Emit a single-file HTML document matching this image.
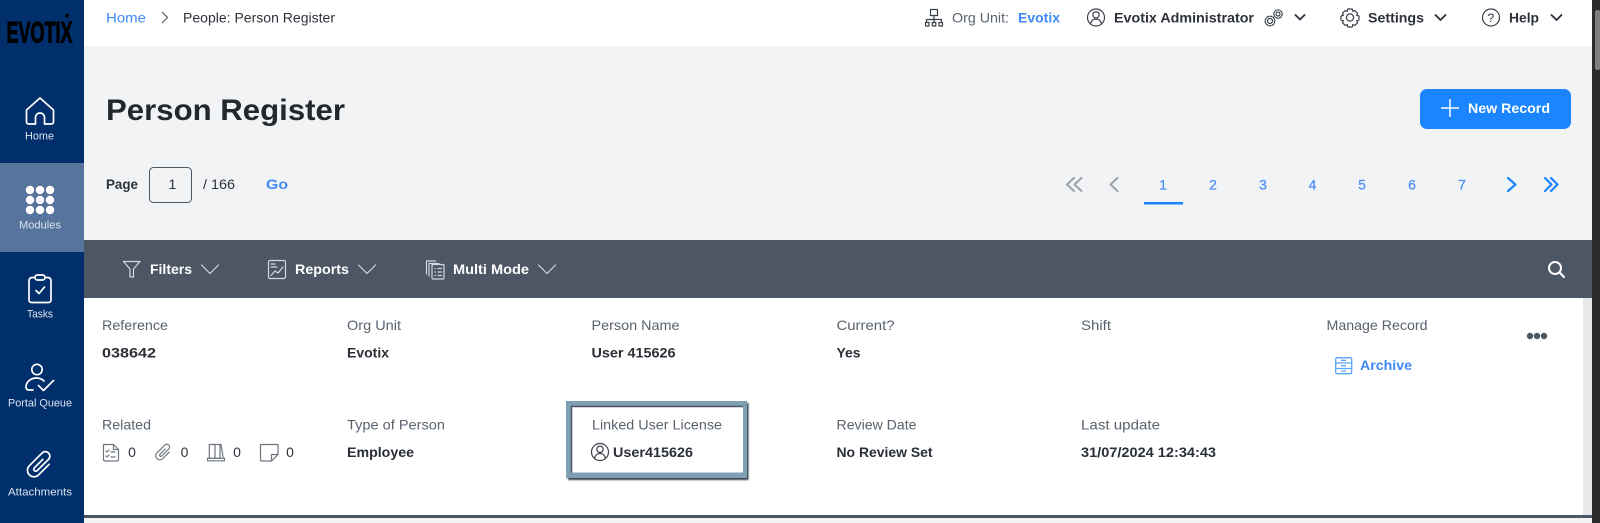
<!DOCTYPE html>
<html lang="en">
<head>
<meta charset="utf-8">
<title>Person Register</title>
<style>
html,body{margin:0;padding:0;width:1600px;height:523px;overflow:hidden;background:#fff}
svg{display:block}
text{font-family:"Liberation Sans",Arial,sans-serif;font-size:14px}
.b{font-weight:700}
.l{fill:#59626f}
.v{fill:#2a2f37;font-weight:700}
.d{fill:#2d323a}
.blue{fill:#3f8af5}
.nav{font-size:11px;fill:#dbe4ef;text-anchor:start}
.pg{fill:#4a90f5;stroke:#4a90f5;stroke-width:.25}
.ic{fill:none;stroke:#3a4049;stroke-width:1.2;stroke-linecap:round;stroke-linejoin:round}
.ch{fill:none;stroke:#2d323a;stroke-width:1.8;stroke-linecap:round;stroke-linejoin:round}
.w{fill:none;stroke:#fff;stroke-width:1.7;stroke-linecap:round;stroke-linejoin:round}
.t{fill:none;stroke:#d5d9df;stroke-width:1.2;stroke-linecap:round;stroke-linejoin:round}
.g{fill:none;stroke:#6e7580;stroke-width:1.2;stroke-linecap:round;stroke-linejoin:round}
</style>
</head>
<body>
<svg width="1600" height="523" viewBox="0 0 1600 523" xmlns="http://www.w3.org/2000/svg">
<defs><filter id="sh" x="-5%" y="-10%" width="110%" height="120%"><feGaussianBlur stdDeviation="0.8"/></filter></defs>
<!-- backgrounds -->
<rect width="1600" height="523" fill="#fff"/>
<rect x="84" y="46" width="1508" height="194" fill="#f2f3f5"/>
<rect x="84" y="240" width="1508" height="58" fill="#4d5665"/>
<rect x="1583" y="298" width="9" height="217" fill="#e7e8ea"/>
<rect x="84" y="515" width="1508" height="3" fill="#4d5665"/>
<rect x="84" y="518" width="1508" height="5" fill="#f2f3f5"/>
<rect x="1592" width="8" height="523" fill="#2b2b2b"/>
<rect x="1595" y="10" width="5" height="60" rx="2" fill="#7f7f7f"/>

<!-- sidebar -->
<rect width="84" height="523" fill="#002f6c"/>
<rect y="163" width="84" height="89" fill="#56749c"/>
<text x="6.500" y="42.600" class="b" style="font-size:29.500px" fill="#000" stroke="#000" stroke-width="1" textLength="66" lengthAdjust="spacingAndGlyphs">EVOTIX</text>
<circle cx="67" cy="15.700" r="1.800" fill="#000"/>

<path class="w" d="M26.500 110L40 98l13.500 12v12a2 2 0 0 1-2 2H44.500v-6.500a4.500 4.500 0 0 0-9 0V124H28.500a2 2 0 0 1-2-2z"/>
<text x="25" y="139.500" class="nav" textLength="29" lengthAdjust="spacingAndGlyphs">Home</text>

<g fill="#fff">
<circle cx="30" cy="190" r="4.200"/><circle cx="40" cy="190" r="4.200"/><circle cx="50" cy="190" r="4.200"/>
<circle cx="30" cy="200" r="4.200"/><circle cx="40" cy="200" r="4.200"/><circle cx="50" cy="200" r="4.200"/>
<circle cx="30" cy="210" r="4.200"/><circle cx="40" cy="210" r="4.200"/><circle cx="50" cy="210" r="4.200"/>
</g>
<text x="19" y="228.500" class="nav" textLength="42" lengthAdjust="spacingAndGlyphs">Modules</text>

<path class="w" d="M35 277.500h-3a3 3 0 0 0-3 3V300a2.500 2.500 0 0 0 2.500 2.500h17a2.500 2.500 0 0 0 2.500-2.500V280.500a3 3 0 0 0-3-3h-3"/>
<rect class="w" x="35" y="275" width="10" height="5" rx="2.500"/>
<path class="w" d="M36 290.500l3 3 5.500-6.500"/>
<text x="27" y="317.500" class="nav" textLength="26" lengthAdjust="spacingAndGlyphs">Tasks</text>

<circle class="w" cx="37" cy="369.500" r="5.200"/>
<path class="w" d="M44 381c-2-2-4.500-3-7.500-3-6 0-10.500 4-10.500 9 0 2 1 3 3 3h4"/>
<path class="w" d="M38.500 385.500l5 5 10-10"/>
<text x="8" y="406.500" class="nav" textLength="64" lengthAdjust="spacingAndGlyphs">Portal Queue</text>

<g transform="translate(40 465) rotate(45)">
<path class="w" d="M6-7V8a6.500 6.500 0 0 1-13 0V-10a4.500 4.500 0 0 1 9 0V6a2 2 0 0 1-4 0V-6"/>
</g>
<text x="8" y="495.500" class="nav" textLength="64" lengthAdjust="spacingAndGlyphs">Attachments</text>

<!-- top bar -->
<text x="106" y="22.500" class="blue" textLength="40" lengthAdjust="spacingAndGlyphs">Home</text>
<path d="M162 12l5.500 5.500-5.500 5.500" fill="none" stroke="#555c66" stroke-width="1.200"/>
<text x="183" y="22.500" class="d" textLength="152" lengthAdjust="spacingAndGlyphs">People: Person Register</text>

<g class="ic">
<rect x="930.500" y="9.500" width="7" height="6"/>
<path d="M934 15.500v4M926.500 22v-2.500h15V22M934 19.500V22"/>
<rect x="925.500" y="22.500" width="3.500" height="3.500"/><rect x="932.300" y="22.500" width="3.500" height="3.500"/><rect x="939" y="22.500" width="3.500" height="3.500"/>
</g>
<text x="952" y="22.500" class="l" textLength="57" lengthAdjust="spacingAndGlyphs">Org Unit:</text>
<text x="1018" y="22.500" class="b blue" textLength="42" lengthAdjust="spacingAndGlyphs">Evotix</text>

<g class="ic">
<circle cx="1096" cy="17.500" r="8.500"/><circle cx="1096" cy="14.800" r="3.200"/>
<path d="M1090.500 24c.6-3.500 3-5 5.500-5s4.900 1.500 5.500 5"/>
</g>
<text x="1114" y="22.500" class="b d" textLength="140" lengthAdjust="spacingAndGlyphs">Evotix Administrator</text>
<g class="ic" stroke-width="1">
<circle cx="1270" cy="21" r="2.500"/><circle cx="1270" cy="21" r="4.800" stroke-dasharray="2 1.200"/>
<circle cx="1278" cy="14" r="2"/><circle cx="1278" cy="14" r="4.200" stroke-dasharray="2 1.200"/>
</g>
<path class="ch" d="M1295.500 15l4.500 4.500 4.500-4.500"/>

<g class="ic">
<circle cx="1350" cy="17.500" r="3.600"/>
<path d="M1347.800 9h4.400l.6 2.400 2-.9 2.800 2.800-1 2 2.400.7v4l-2.400.7 1 2-2.800 2.800-2-.9-.6 2.400h-4.400l-.6-2.400-2 .9-2.800-2.800 1-2-2.400-.7v-4l2.400-.7-1-2 2.800-2.800 2 .9z"/>
</g>
<text x="1368" y="22.500" class="b d" textLength="56" lengthAdjust="spacingAndGlyphs">Settings</text>
<path class="ch" d="M1435.500 15l5 5 5-5"/>

<circle class="ic" cx="1491" cy="17.500" r="8.500"/>
<text x="1487.500" y="22" style="font-size:12px" class="d">?</text>
<text x="1509" y="22.500" class="b d" textLength="30" lengthAdjust="spacingAndGlyphs">Help</text>
<path class="ch" d="M1551.500 15l5 5 5-5"/>

<!-- heading -->
<text x="106" y="120" class="b" style="font-size:30px" fill="#23272e" textLength="239" lengthAdjust="spacingAndGlyphs">Person Register</text>
<rect x="1420" y="89" width="151" height="40" rx="7" fill="#1a85ff"/>
<path d="M1450 99v18M1441 108h18" stroke="#fff" stroke-width="1.500" fill="none"/>
<text x="1468" y="113" class="b" fill="#fff" textLength="82" lengthAdjust="spacingAndGlyphs">New Record</text>

<!-- pager -->
<text x="106" y="189" class="b d" textLength="32" lengthAdjust="spacingAndGlyphs">Page</text>
<rect x="149.500" y="167.500" width="42" height="35" rx="4" fill="none" stroke="#4d5665"/>
<text x="168.500" y="189" class="d">1</text>
<text x="203" y="189" class="d" textLength="32" lengthAdjust="spacingAndGlyphs">/ 166</text>
<text x="266" y="189" class="b blue" textLength="22" lengthAdjust="spacingAndGlyphs">Go</text>

<g fill="none" stroke-width="2.200" stroke-linecap="round" stroke-linejoin="round">
<path stroke="#9ea4ae" d="M1074 178l-7 6.500 7 6.500M1081.500 178l-7 6.500 7 6.500M1117.500 178l-7 6.500 7 6.500"/>
<path stroke="#1a85ff" d="M1508 178l7.500 6.500-7.500 6.500M1545 178l6.500 6.500-6.500 6.500M1551 178l6.500 6.500-6.500 6.500"/>
</g>
<g class="pg" text-anchor="middle">
<text x="1163" y="189.500">1</text><text x="1213" y="189.500">2</text><text x="1263" y="189.500">3</text><text x="1312.500" y="189.500">4</text><text x="1362" y="189.500">5</text><text x="1412" y="189.500">6</text><text x="1462" y="189.500">7</text>
</g>
<rect x="1144" y="202" width="39" height="2.500" fill="#1a85ff"/>

<!-- toolbar -->
<path class="t" d="M123.500 261.500h16.500l-6.500 7.500v8h-3.500v-8z"/>
<text x="150" y="274" class="b" fill="#fff" textLength="42" lengthAdjust="spacingAndGlyphs">Filters</text>
<path class="t" d="M201.500 265l8.500 8.500 8.500-8.500"/>
<rect class="t" x="268.500" y="260.500" width="17" height="18" rx="1.500"/>
<path class="t" d="M271 264h4M271 267h6M271 275.500l4-4.500 3 2 5-6"/>
<text x="295" y="274" class="b" fill="#fff" textLength="54" lengthAdjust="spacingAndGlyphs">Reports</text>
<path class="t" d="M358.500 265l8.500 8.500 8.500-8.500"/>
<path class="t" d="M426.500 274v-13h9M429 276v-12.500h10"/>
<rect class="t" x="432" y="264.500" width="12" height="14.500" rx="1"/>
<path class="t" d="M435 268.500h.5M438 268.500h3.500M435 272h.5M438 272h3.500M435 275.500h.5M438 275.500h3.500"/>
<text x="453" y="274" class="b" fill="#fff" textLength="76" lengthAdjust="spacingAndGlyphs">Multi Mode</text>
<path class="t" d="M538.500 265l8.500 8.500 8.500-8.500"/>
<circle cx="1555" cy="268" r="6" fill="none" stroke="#fff" stroke-width="2"/>
<path d="M1559.500 272.500l4.500 4.500" stroke="#fff" stroke-width="2.200" stroke-linecap="round"/>

<!-- row 1 -->
<text x="102" y="330" class="l" textLength="66" lengthAdjust="spacingAndGlyphs">Reference</text>
<text x="102" y="357.500" class="v" textLength="54" lengthAdjust="spacingAndGlyphs">038642</text>
<text x="347" y="330" class="l" textLength="54" lengthAdjust="spacingAndGlyphs">Org Unit</text>
<text x="347" y="357.500" class="v" textLength="42" lengthAdjust="spacingAndGlyphs">Evotix</text>
<text x="591.500" y="330" class="l" textLength="88" lengthAdjust="spacingAndGlyphs">Person Name</text>
<text x="591.500" y="357.500" class="v" textLength="84" lengthAdjust="spacingAndGlyphs">User 415626</text>
<text x="836.500" y="330" class="l" textLength="58" lengthAdjust="spacingAndGlyphs">Current?</text>
<text x="836.500" y="357.500" class="v" textLength="24" lengthAdjust="spacingAndGlyphs">Yes</text>
<text x="1081" y="330" class="l" textLength="30" lengthAdjust="spacingAndGlyphs">Shift</text>
<text x="1326.500" y="330" class="l" textLength="101" lengthAdjust="spacingAndGlyphs">Manage Record</text>
<g fill="none" stroke="#5aa4fa" stroke-width="1.300">
<rect x="1335.700" y="357.700" width="16" height="16" rx="1.500"/>
<path d="M1336 363h15.500M1336 368.500h15.500M1341 360.300h5M1341 365.800h5M1341 371h5"/>
</g>
<text x="1360" y="370" class="b blue" textLength="52" lengthAdjust="spacingAndGlyphs">Archive</text>
<g fill="#4d5665"><circle cx="1530" cy="336" r="3.200"/><circle cx="1537" cy="336" r="3.200"/><circle cx="1544" cy="336" r="3.200"/></g>

<!-- row 2 -->
<text x="102" y="429.500" class="l" textLength="49" lengthAdjust="spacingAndGlyphs">Related</text>
<g class="g">
<path d="M103.500 444.500h10l5 5v10a1.500 1.500 0 0 1-1.500 1.500h-12a1.500 1.500 0 0 1-1.500-1.500zM113.500 444.500v5h5"/>
<path d="M106 451l1 1 2-2M106 456l1 1 2-2M111 452h4M111 457h4"/>
</g>
<text x="132" y="457" class="d" text-anchor="middle">0</text>
<g class="g" transform="translate(163.500 452.500) rotate(45) scale(.62)">
<path stroke-width="1.900" d="M6-7V8a6.500 6.500 0 0 1-13 0V-10a4.500 4.500 0 0 1 9 0V6a2 2 0 0 1-4 0V-6"/>
</g>
<text x="184.500" y="457" class="d" text-anchor="middle">0</text>
<g class="g">
<path d="M209.300 444.500h5.700v13.800h-5.700zM215 444.500h5v13.800h-5zM220 444.500h1l2.300 13.800"/>
<path d="M207.500 458.300h17v2.500h-17z"/>
</g>
<text x="237" y="457" class="d" text-anchor="middle">0</text>
<path class="g" d="M260.500 444.500h16.500a1 1 0 0 1 1 1v9l-6.500 6.500H261.500a1 1 0 0 1-1-1zM278 454.500h-6.500v6.500"/>
<text x="290" y="457" class="d" text-anchor="middle">0</text>

<text x="347" y="429.500" class="l" textLength="98" lengthAdjust="spacingAndGlyphs">Type of Person</text>
<text x="347" y="457" class="v" textLength="67" lengthAdjust="spacingAndGlyphs">Employee</text>

<!-- highlight -->
<rect x="568" y="403" width="180.500" height="77" fill="#3a444e" filter="url(#sh)"/>
<rect x="566" y="401" width="181" height="77" fill="#7f9fb4"/>
<rect x="571.500" y="406.500" width="171.500" height="66" fill="#fff"/>
<path d="M571.500 472.500v-66h171.500" fill="none" stroke="#4a5560" stroke-width="1.500"/>
<text x="592" y="429.500" class="l" textLength="130" lengthAdjust="spacingAndGlyphs">Linked User License</text>
<g class="ic">
<circle cx="600" cy="452" r="8.500"/><circle cx="600" cy="449.300" r="3.200"/>
<path d="M594.500 458.500c.6-3.500 3-5 5.500-5s4.900 1.500 5.500 5"/>
</g>
<text x="613" y="457" class="v" textLength="80" lengthAdjust="spacingAndGlyphs">User415626</text>

<text x="836.500" y="429.500" class="l" textLength="80" lengthAdjust="spacingAndGlyphs">Review Date</text>
<text x="836.500" y="457" class="v" textLength="96" lengthAdjust="spacingAndGlyphs">No Review Set</text>
<text x="1081" y="429.500" class="l" textLength="79" lengthAdjust="spacingAndGlyphs">Last update</text>
<text x="1081" y="457" class="v" textLength="135" lengthAdjust="spacingAndGlyphs">31/07/2024 12:34:43</text>
</svg>
</body>
</html>
